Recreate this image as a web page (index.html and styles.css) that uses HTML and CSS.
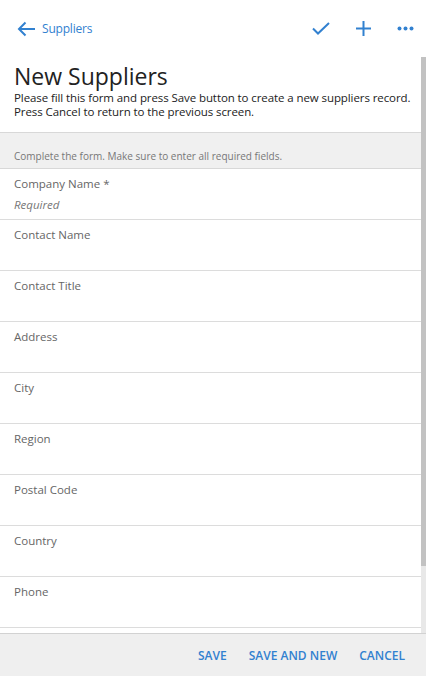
FILE: index.html
```html
<!DOCTYPE html>
<html>
<head>
<meta charset="utf-8">
<link rel="stylesheet" href="styles.css">
</head>
<body>
<div class="app">
  <header class="header">
    <a class="back">
      <svg class="back-icon" width="19" height="16" viewBox="0 0 19 16"><path d="M18 8H2M8.5 1.5L2 8l6.5 6.5" fill="none" stroke="#3281d0" stroke-width="2"/></svg>
      <span class="back-text">Suppliers</span>
    </a>
    <div class="actions">
      <svg class="act" width="18" height="13" viewBox="0 0 18 13"><path d="M1 6.5l5 5L17 1" fill="none" stroke="#3281d0" stroke-width="2"/></svg>
      <svg class="act" width="15" height="15" viewBox="0 0 15 15"><path d="M7.5 0v15M0 7.5h15" fill="none" stroke="#3281d0" stroke-width="2"/></svg>
      <svg class="act" width="17" height="5" viewBox="0 0 17 5"><circle cx="2.5" cy="2.5" r="2" fill="#3281d0"/><circle cx="8.5" cy="2.5" r="2" fill="#3281d0"/><circle cx="14.5" cy="2.5" r="2" fill="#3281d0"/></svg>
    </div>
  </header>
  <div class="body-row">
    <main class="scroll">
      <section class="intro">
        <h1 class="title">New Suppliers</h1>
        <p class="desc">Please fill this form and press Save button to create a new suppliers record.<br>Press Cancel to return to the previous screen.</p>
      </section>
      <div class="hint">Complete the form. Make sure to enter all required fields.</div>
      <div class="field"><div class="label">Company Name *</div><div class="req">Required</div></div>
      <div class="field"><div class="label">Contact Name</div></div>
      <div class="field"><div class="label">Contact Title</div></div>
      <div class="field"><div class="label">Address</div></div>
      <div class="field"><div class="label">City</div></div>
      <div class="field"><div class="label">Region</div></div>
      <div class="field"><div class="label">Postal Code</div></div>
      <div class="field"><div class="label">Country</div></div>
      <div class="field"><div class="label">Phone</div></div>
    </main>
    <div class="scrollbar"><div class="thumb"></div></div>
  </div>
  <footer class="footer">
    <span class="btn">SAVE</span>
    <span class="btn">SAVE AND NEW</span>
    <span class="btn">CANCEL</span>
  </footer>
</div>
</body>
</html>
```
FILE: styles.css
```css
html, body {
  margin: 0;
  padding: 0;
  background: #fff;
}
body {
  font-family: "Open Sans", "Noto Sans", sans-serif;
  color: #222;
}
.app {
  display: flex;
  flex-direction: column;
  height: 676px;
  width: 426px;
  overflow: hidden;
}
.header {
  height: 57px;
  flex: none;
  display: flex;
  align-items: center;
  justify-content: space-between;
  padding: 0 12px 0 17px;
}
.back {
  display: flex;
  align-items: center;
  gap: 6px;
  color: #3281d0;
  font-size: 12px;
  letter-spacing: -0.2px;
}
.back-icon { display: block; }
.actions {
  display: flex;
  align-items: center;
  gap: 26px;
}
.act { display: block; }
.body-row {
  flex: 1;
  display: flex;
  min-height: 0;
}
.scroll {
  flex: 1;
  overflow: hidden;
}
.scrollbar {
  width: 5px;
  flex: none;
  background: #e8e8e8;
}
.thumb {
  height: 509px;
  background: #c2c2c2;
}
.intro {
  padding: 5px 14px 13px;
}
.title {
  margin: 0;
  font-size: 23px;
  font-weight: 400;
  line-height: 29px;
  color: #222;
}
.desc {
  margin: 0;
  font-size: 11.5px;
  letter-spacing: -0.09px;
  line-height: 14px;
  color: #222;
  white-space: nowrap;
}
.hint {
  background: #f0f0f0;
  border-top: 1px solid #d8d8d8;
  border-bottom: 1px solid #d8d8d8;
  height: 19px;
  padding: 16px 14px 0;
  font-size: 10px;
  line-height: 14px;
  color: #777;
}
.field {
  height: 51px;
  border-bottom: 1px solid #dcdcdc;
  padding: 6px 14px 0;
  box-sizing: border-box;
}
.label {
  font-size: 11.5px;
  line-height: 17px;
  color: #666;
}
.req {
  margin-top: 5px;
  font-size: 11.5px;
  font-style: italic;
  color: #777;
  line-height: 15px;
}
.footer {
  height: 43px;
  flex: none;
  background: #efefef;
  border-top: 1px solid #d2d2d2;
  box-sizing: border-box;
  display: flex;
  align-items: center;
  justify-content: flex-end;
  gap: 22px;
  padding: 0 21px 0 0;
}
.btn {
  color: #3281d0;
  font-size: 12px;
  font-weight: 600;
}
```
